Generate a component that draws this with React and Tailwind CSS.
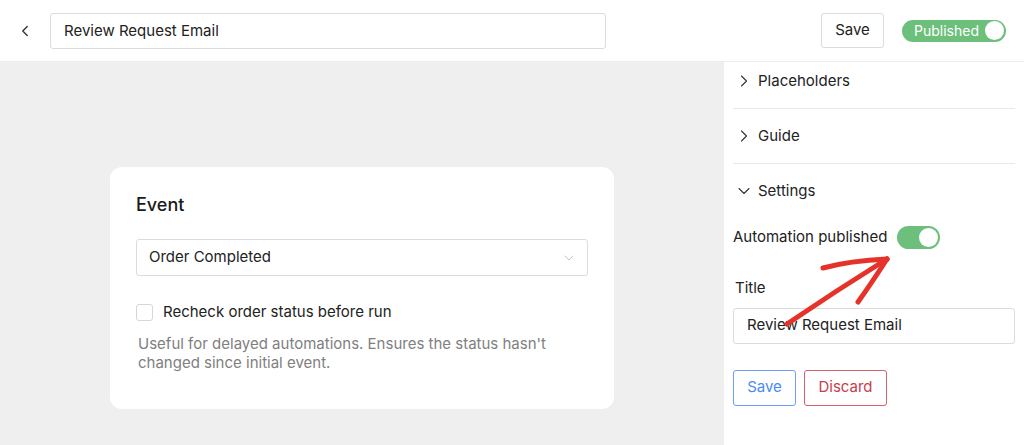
import { ChevronLeft, ChevronRight, ChevronDown } from 'lucide-react';

const font = { fontFamily: 'Inter, "Noto Sans", sans-serif' };

const Section = ({ title, open, first }) => (
  <div className={open ? '' : 'border-b border-[#e8e8e8]'}>
    <div
      className={
        first
          ? 'mb-[8px] flex h-[38px] items-center gap-[4px] pl-[1px]'
          : 'flex h-[54px] items-center gap-[4px] pl-[1px]'
      }
    >
      {open ? (
        <ChevronDown size={20} strokeWidth={1.3} className="text-[#333]" />
      ) : (
        <ChevronRight size={20} strokeWidth={1.3} className="text-[#333]" />
      )}
      <span className="text-[15px] text-[#222]">{title}</span>
    </div>
  </div>
);

export default function App() {
  return (
    <div className="relative flex h-[445px] w-[1024px] flex-col bg-white" style={font}>
      <header className="flex h-[62px] items-center border-b border-[#ececec] pl-[16px] pr-[18px]">
        <ChevronLeft size={18} strokeWidth={1.8} className="text-[#333]" />
        <div className="ml-[16px] flex h-[36px] w-[556px] items-center rounded-[3px] border border-[#dcdcdc] px-[13px] pt-[2px] text-[15px] text-[#222]">
          Review Request Email
        </div>
        <div className="ml-auto flex items-center gap-[18px]">
          <button type="button" className="h-[35px] w-[63px] rounded-[3px] border border-[#dcdcdc] text-[15px] text-[#222]">
            Save
          </button>
          <div className="w-[104px]">
            <div className="flex h-[22px] items-center justify-between rounded-full bg-[#6cc07b] pl-[12px] pr-[2px]">
              <span className="text-[14px] text-white">Published</span>
              <span className="h-[19px] w-[19px] rounded-full bg-white" />
            </div>
          </div>
        </div>
      </header>

      <div className="flex flex-1">
        <main className="flex w-[724px] items-start bg-[#efefef] pl-[110px] pt-[105px]">
          <div className="w-[504px] rounded-[12px] bg-white px-[26px] pb-[37px] pt-[24px]">
            <h2 className="text-[18px] font-medium text-[#1a1a1a]">Event</h2>
            <div className="mt-[21px] flex h-[37px] items-center justify-between rounded-[3px] border border-[#dcdcdc] pl-[12px] pr-[10px]">
              <span className="text-[15px] text-[#222]">Order Completed</span>
              <ChevronDown size={16} strokeWidth={1.2} className="text-[#b5b5b5]" />
            </div>
            <label className="mt-[25px] flex items-center gap-[10px]">
              <span className="h-[17px] w-[17px] rounded-[3px] border border-[#d6d6d6]" />
              <span className="text-[15px] text-[#222]">Recheck order status before run</span>
            </label>
            <p className="mt-[10px] pl-[2px] text-[15px] leading-[19px] text-[#808080]">
              Useful for delayed automations. Ensures the status hasn&apos;t
              <br />
              changed since initial event.
            </p>
          </div>
        </main>

        <aside className="flex-1 pl-[9px] pr-[9px]">
          <Section title="Placeholders" first />
          <Section title="Guide" />
          <Section title="Settings" open />
          <div className="mt-[8px] flex items-center gap-[10px]">
            <span className="text-[15px] text-[#222]">Automation published</span>
            <div className="flex h-[23px] w-[43px] items-center justify-end rounded-full bg-[#6cc07b] pr-[2px]">
              <span className="h-[19px] w-[19px] rounded-full bg-white" />
            </div>
          </div>
          <div className="mt-[28px] pl-[2px] text-[15px] text-[#222]">Title</div>
          <div className="mt-[8px] flex h-[36px] items-center rounded-[3px] border border-[#dcdcdc] px-[13px] text-[15px] text-[#222]">
            Review Request Email
          </div>
          <div className="mt-[26px] flex gap-[8px]">
            <button type="button" className="h-[36px] w-[63px] rounded-[3px] border border-[#6a9ff5] text-[15px] text-[#4b8af2]">
              Save
            </button>
            <button type="button" className="h-[36px] w-[83px] rounded-[3px] border border-[#d0626c] text-[15px] text-[#c6404c]">
              Discard
            </button>
          </div>
        </aside>
      </div>

      <svg className="pointer-events-none absolute left-0 top-0" width="1024" height="445" viewBox="0 0 1024 445">
        <g fill="none" stroke="#e5332a" strokeWidth="5" strokeLinecap="round" strokeLinejoin="round">
          <path d="M787 324 C 815 305, 850 282, 887 259" />
          <path d="M823 268 C 845 262, 866 260, 887 259" />
          <path d="M858 302 C 868 288, 878 273, 887 259" />
        </g>
      </svg>
    </div>
  );
}
